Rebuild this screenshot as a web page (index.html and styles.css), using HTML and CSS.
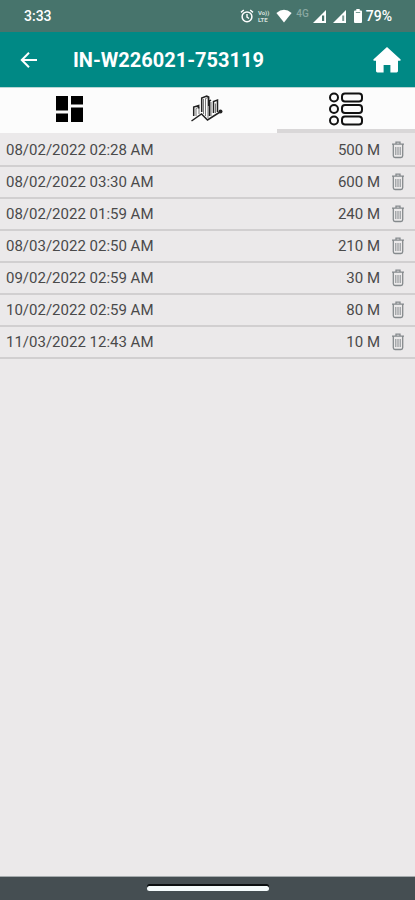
FILE: index.html
```html
<!DOCTYPE html>
<html lang="en">
<head>
    <meta charset="UTF-8">
    <meta name="viewport" content="width=device-width, initial-scale=1.0">
    <title>IN-W226021-753119</title>
    <link rel="stylesheet" href="styles.css">
</head>
<body>
    <!-- Shared icon -->
    <svg class="symbols" width="0" height="0" aria-hidden="true">
        <symbol id="trash" viewBox="0 0 14 18">
            <path d="M5 2.5V1.2h4v1.3M1 3.2h12M2.3 3.5v11.3q0 1.7 1.7 1.7h6q1.7 0 1.7-1.7V3.5" fill="none" stroke="currentColor" stroke-width="1.3"/>
            <path d="M4.8 6v8M7 6v8M9.2 6v8" fill="none" stroke="currentColor" stroke-width="1"/>
        </symbol>
    </svg>

    <div class="status-bar">
        <span class="time">3:33</span>
        <div class="status-icons">
            <svg class="alarm" width="14" height="14" viewBox="0 0 14 14">
                <circle cx="7" cy="7.8" r="4.9" fill="none" stroke="#fff" stroke-width="1.5"/>
                <path d="M1 3.4L3.8 1M13 3.4L10.2 1M7 5v3.2l2 1.3" fill="none" stroke="#fff" stroke-width="1.4"/>
            </svg>
            <div class="volte">
                <span>Vo))</span>
                <span>LTE</span>
            </div>
            <svg class="wifi" width="16" height="14" viewBox="0 0 16 14">
                <path d="M8 13.4L.4 4Q8-2.4 15.6 4z" fill="#fff"/>
            </svg>
            <span class="network">4G</span>
            <svg class="signal" width="13" height="13" viewBox="0 0 13 13">
                <path d="M0 13L13 0v13z" fill="#fff"/>
                <path d="M9 5.5h2.2V11H9z" fill="#47746c"/>
            </svg>
            <svg class="signal" width="13" height="13" viewBox="0 0 13 13">
                <path d="M0 13L13 0v13z" fill="#fff"/>
                <path d="M9.2 5.5h2V11h-2z" fill="#7b9c96"/>
            </svg>
            <svg class="battery" width="8" height="14" viewBox="0 0 8 14">
                <path d="M2.3 0h3.4v1.4H7q1 0 1 1V13q0 1-1 1H1q-1 0-1-1V2.4q0-1 1-1h1.3z" fill="#fff"/>
                <path d="M1.8 3h4.4v1H1.8z" fill="#7b9c96"/>
            </svg>
            <span class="percent">79%</span>
        </div>
    </div>

    <header class="app-bar">
        <button class="icon-button" type="button" aria-label="Back">
            <svg width="18" height="18" viewBox="0 0 18 18">
                <path d="M17 9H2M9 1.8L1.8 9 9 16.2" fill="none" stroke="#fff" stroke-width="2"/>
            </svg>
        </button>
        <h1>IN-W226021-753119</h1>
        <button class="icon-button" type="button" aria-label="Home">
            <svg width="28" height="26" viewBox="0 0 28 26">
                <path d="M14 0l13.4 12.2q.9 1.3-.6 1.5H25V24q0 1.4-1.4 1.4h-6.2V18h-6.8v7.4H4.4Q3 25.4 3 24V13.7H1.2q-1.5-.2-.6-1.5z" fill="#fff"/>
            </svg>
        </button>
    </header>

    <nav class="tabs">
        <button class="tab" type="button" aria-label="Dashboard">
            <svg width="27" height="26" viewBox="0 0 27 26">
                <path d="M0 0h12v14.5H0zM15 0h12v8.500H15zM0 17.500h12V26H0zM15 11.500h12V26H15z" fill="#000"/>
            </svg>
        </button>
        <button class="tab" type="button" aria-label="Chart">
            <svg width="34" height="30" viewBox="0 0 34 30">
                <path d="M1.5 27L11.500 20l6 6L30 18" fill="none" stroke="#222" stroke-width="1.500"/>
                <path d="M6 22v-7.500l3-1.500v7M13.500 20V5M15.500 22V4.500l2.500-1V24M21 22V8M25.500 19V9.500" fill="none" stroke="#777" stroke-width="1"/>
                <path d="M3.700 22v-9l5-1.500v3M11.700 18V4l5-2 2 1v9M19.500 22V7l1.500-1M23.500 19V7.500L27.500 6v12" fill="none" stroke="#222" stroke-width="1.500"/>
                <circle cx="30.500" cy="17.500" r="2" fill="#222"/>
            </svg>
        </button>
        <button class="tab active" type="button" aria-label="List">
            <svg width="36" height="34" viewBox="0 0 36 34">
                <g fill="none" stroke="#111" stroke-width="2">
                    <circle cx="6" cy="5.5" r="4"/>
                    <circle cx="6" cy="17" r="4"/>
                    <circle cx="6" cy="28.5" r="4"/>
                    <rect x="14" y="1.5" width="20" height="8" rx="3"/>
                    <rect x="14" y="13" width="20" height="8" rx="3"/>
                    <rect x="14" y="24.5" width="20" height="8" rx="3"/>
                </g>
            </svg>
        </button>
    </nav>

    <main class="content">
        <ul class="records">
            <li class="record">
                <span class="date">08/02/2022 02:28 AM</span>
                <span class="amount">500 M</span>
                <button class="delete" type="button" aria-label="Delete"><svg width="14" height="18"><use href="#trash"/></svg></button>
            </li>
            <li class="record">
                <span class="date">08/02/2022 03:30 AM</span>
                <span class="amount">600 M</span>
                <button class="delete" type="button" aria-label="Delete"><svg width="14" height="18"><use href="#trash"/></svg></button>
            </li>
            <li class="record">
                <span class="date">08/02/2022 01:59 AM</span>
                <span class="amount">240 M</span>
                <button class="delete" type="button" aria-label="Delete"><svg width="14" height="18"><use href="#trash"/></svg></button>
            </li>
            <li class="record">
                <span class="date">08/03/2022 02:50 AM</span>
                <span class="amount">210 M</span>
                <button class="delete" type="button" aria-label="Delete"><svg width="14" height="18"><use href="#trash"/></svg></button>
            </li>
            <li class="record">
                <span class="date">09/02/2022 02:59 AM</span>
                <span class="amount">30 M</span>
                <button class="delete" type="button" aria-label="Delete"><svg width="14" height="18"><use href="#trash"/></svg></button>
            </li>
            <li class="record">
                <span class="date">10/02/2022 02:59 AM</span>
                <span class="amount">80 M</span>
                <button class="delete" type="button" aria-label="Delete"><svg width="14" height="18"><use href="#trash"/></svg></button>
            </li>
            <li class="record">
                <span class="date">11/03/2022 12:43 AM</span>
                <span class="amount">10 M</span>
                <button class="delete" type="button" aria-label="Delete"><svg width="14" height="18"><use href="#trash"/></svg></button>
            </li>
        </ul>
    </main>

    <div class="nav-bar">
        <div class="handle"></div>
    </div>
</body>
</html>
```
FILE: styles.css
```css
* {
    box-sizing: border-box;
}
body {
    margin: 0;
    min-height: 100vh;
    display: flex;
    flex-direction: column;
    background-color: #ebe9ea;
    color: #4a4a4a;
    font-family: Roboto, "Liberation Sans", sans-serif;
}
button {
    padding: 0;
    border: none;
    background: none;
    color: inherit;
    cursor: pointer;
}
svg {
    display: block;
}
.symbols {
    position: absolute;
}

/* Status bar */
.status-bar {
    display: flex;
    align-items: center;
    justify-content: space-between;
    height: 32px;
    padding: 0 23px 0 24px;
    background-color: #47746c;
    color: #fff;
    font-size: 14px;
    font-weight: 500;
}
.status-icons {
    display: flex;
    align-items: center;
    gap: 4px;
}
.volte {
    display: flex;
    flex-direction: column;
    font-size: 6px;
    line-height: 7px;
    font-weight: 700;
    color: #d5e0de;
}
.wifi {
    margin-left: 3px;
}
.network {
    font-size: 10px;
    line-height: 12px;
    padding-bottom: 4px;
    color: #89a8a2;
}
.signal + .signal {
    margin: 0 4px 0 3px;
}

/* App bar */
.app-bar {
    display: flex;
    align-items: center;
    height: 55px;
    padding: 0 14px 0 20px;
    background-color: #008985;
    color: #fff;
}
.app-bar h1 {
    flex: 1;
    margin: 0 0 0 35px;
    font-size: 20px;
    font-weight: 700;
}

/* Tabs */
.tabs {
    display: flex;
    height: 46px;
    border-top: 1px solid #b9d6d5;
    background-color: #fcfcfc;
}
.tab {
    flex: 1;
    display: flex;
    align-items: center;
    justify-content: center;
    padding-bottom: 4px;
    border-bottom: 0 solid #d9d7d8;
}
.tab.active {
    padding-bottom: 0;
    border-bottom-width: 4px;
}

/* Records */
.content {
    flex: 1;
}
.records {
    margin: 0;
    padding: 2px 0 0;
    list-style: none;
}
.record {
    display: flex;
    align-items: center;
    min-height: 32px;
    padding: 0 10px 0 6px;
    border-bottom: 2px solid #d1cfd0;
    font-size: 15px;
}
.date {
    flex: 1;
}
.delete {
    margin-left: 11px;
    color: #858a8d;
}

/* Gesture bar */
.nav-bar {
    display: flex;
    align-items: center;
    justify-content: center;
    height: 24px;
    border-top: 1px solid #a5abad;
    background-color: #454e52;
}
.handle {
    width: 122px;
    height: 5px;
    border-radius: 3px;
    background-color: #f5fbfc;
    box-shadow: 0 -2px 0 #0b0f11;
}
```
